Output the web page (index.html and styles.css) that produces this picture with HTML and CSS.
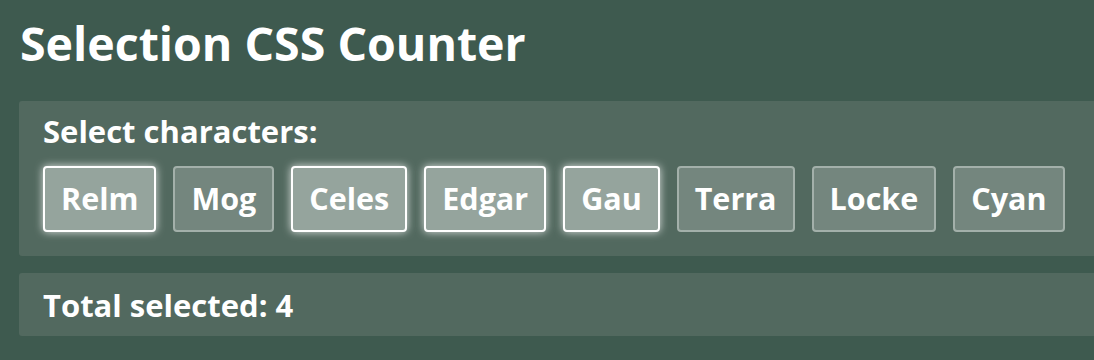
FILE: index.html
```html
<!DOCTYPE HTML>
<html lang="en">
<head>
    <meta charset="utf-8">
    <meta name="viewport" content="width=device-width, initial-scale=1">
    <title>Selection CSS Counter</title>
    <link rel="stylesheet" href="styles.css">
</head>
<body>
    <h1>Selection CSS Counter</h1>
    <div class="panel picker">
        <div class="label">Select characters:</div>
        <div class="chars">
            <label class="char selected">Relm</label>
            <label class="char">Mog</label>
            <label class="char selected">Celes</label>
            <label class="char selected">Edgar</label>
            <label class="char selected">Gau</label>
            <label class="char">Terra</label>
            <label class="char">Locke</label>
            <label class="char">Cyan</label>
        </div>
    </div>
    <div class="panel total">Total selected: 4</div>
</body>
</html>
```

FILE: styles.css
```css
html {
    overflow: hidden;
}
body {
    margin: 0;
    padding: 0 0 0 19px;
    background-color: #3e5a4f;
    color: #fff;
    font-family: "Open Sans", sans-serif;
    font-weight: 700;
}
h1 {
    margin: 0;
    padding: 12px 0 0 1px;
    height: 101px;
    box-sizing: border-box;
    font-size: 46.5px;
    line-height: 63px;
}
.panel {
    background-color: #52695f;
    border-radius: 3px;
    margin-right: -40px;
    padding: 0 24px;
}
.picker {
    padding-top: 9px;
    padding-bottom: 24px;
}
.label {
    font-size: 31px;
    line-height: 42px;
}
.chars {
    display: flex;
    gap: 17px;
    margin-top: 14px;
}
.char {
    display: flex;
    align-items: center;
    height: 66px;
    box-sizing: border-box;
    padding: 0 16px 3px;
    border: 2px solid #a3b0aa;
    border-radius: 4px;
    background-color: #74867e;
    font-size: 30.5px;
}
.char.selected {
    border-color: #fff;
    background-color: #95a49d;
    box-shadow: 0 0 8px rgba(255, 255, 255, 0.8);
}
.total {
    margin-top: 17px;
    height: 63px;
    display: flex;
    align-items: center;
    font-size: 31px;
}
```
